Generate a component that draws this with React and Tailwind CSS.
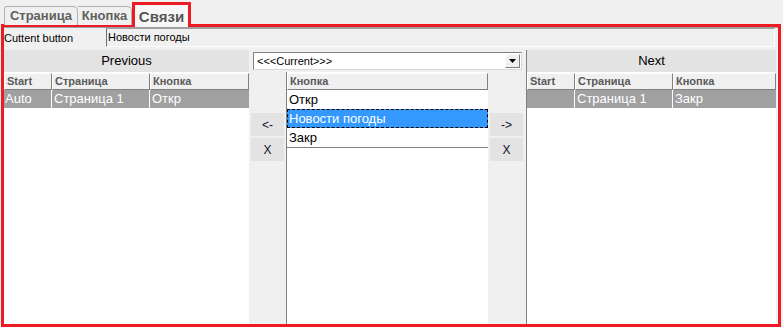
import React from "react";

const raised =
  "border border-t-white border-l-white border-r-[#808080] border-b-[#808080] bg-[#f0f0f0]";

function HeadCell({ w, children }) {
  return (
    <div
      className={`${w} h-[17px] ${raised} flex items-center pl-[2px] text-[11px] font-bold text-[#5a5a5a]`}
    >
      {children}
    </div>
  );
}

function LinkTable({ rows }) {
  return (
    <div className="flex-1 bg-white flex flex-col pt-[1px]">
      <div className="flex">
        <HeadCell w="w-[48px]">Start</HeadCell>
        <HeadCell w="w-[98px]">Страница</HeadCell>
        <HeadCell w="flex-1">Кнопка</HeadCell>
      </div>
      {rows.map((r, i) => (
        <div key={i} className="flex h-[18px] bg-[#a0a0a0] text-white text-[13px] leading-[18px]">
          <div className="w-[48px] pl-[1px] border-r border-white">{r[0]}</div>
          <div className="w-[98px] pl-[2px] border-r border-white">{r[1]}</div>
          <div className="flex-1 pl-[2px]">{r[2]}</div>
        </div>
      ))}
    </div>
  );
}

function SideButtons({ left }) {
  return (
    <div className="w-[37px] bg-[#f0f0f0] flex flex-col items-center pt-[41px] gap-[2px]">
      <div className="w-[33px] h-[23px] bg-[#e3e3e3] flex items-center justify-center text-[12px] text-[#101030]">
        {left ? "<-" : "->"}
      </div>
      <div className="w-[33px] h-[23px] bg-[#e3e3e3] flex items-center justify-center text-[12px] text-[#101030]">
        X
      </div>
    </div>
  );
}

export default function App() {
  const items = ["Откр", "Новости погоды", "Закр"];
  return (
    <div
      className="w-[783px] h-[327px] bg-[#f0f0f0] overflow-hidden flex flex-col"
      style={{ fontFamily: '"Liberation Sans", Arial, sans-serif' }}
    >
      {/* tabs */}
      <div className="h-[24px] flex items-end pl-[4px] relative z-10">
        <div className="h-[19px] mb-[-1px] w-[74px] border border-[#b0b0b0] border-b-0 rounded-tl-[3px] rounded-tr-[5px] bg-[#f0f0f0] text-[13px] font-bold text-[#606060] flex items-center justify-center">
          Страница
        </div>
        <div className="h-[19px] mb-[-1px] w-[54px] border border-l-0 border-[#b0b0b0] border-b-0 rounded-tr-[5px] bg-[#f0f0f0] text-[13px] font-bold text-[#606060] flex items-center justify-center">
          Кнопка
        </div>
        <div className="h-[25px] mb-[-3px] w-[59px] border-[3px] border-b-0 border-[#ed1c24] bg-[#f7f7f7] text-[15px] font-bold text-[#555] flex items-start justify-center pt-[1px]">
          Связи
        </div>
      </div>

      {/* frame */}
      <div className="ml-[1px] w-[780px] h-[303px] border-[3px] border-[#ed1c24] flex flex-col">
        <div className="flex h-[20px] border-t border-[#a0a0a0]">
          <div className="w-[102px] text-[11px] text-black leading-[18px] pt-[1px]">Cuttent button</div>
          <div className="w-[669px] h-[19px] border border-t-[#a0a0a0] border-l-[#707070] border-r-white border-b-white bg-[#f0f0f0] text-[11px] leading-[16px] pl-[1px]">
            Новости погоды
          </div>
        </div>

        <div className="flex flex-1 mt-[3px] pr-[2px]">
          {/* previous */}
          <div className="w-[245px] flex flex-col">
            <div className="h-[22px] bg-[#e3e3e3] flex items-center justify-center text-[13px] text-black">
              Previous
            </div>
            <LinkTable rows={[["Auto", "Страница 1", "Откр"]]} />
          </div>

          {/* middle */}
          <div className="w-[277px] flex flex-col">
            <div className="h-[22px] flex items-center pl-[4px]">
              <div className="w-[269px] h-[18px] bg-white border border-t-[#808080] border-l-[#808080] border-r-[#d8d8d8] border-b-[#d8d8d8] flex items-center">
                <div className="flex-1 text-[11px] pl-[3px] text-black">{"<<<Current>>>"}</div>
                <div className="w-[15px] h-[14px] mr-[1px] bg-[#f0f0f0] border border-t-white border-l-white border-r-[#808080] border-b-[#808080] flex items-center justify-center">
                  <svg width="7" height="4" viewBox="0 0 7 4">
                    <path d="M0 0h7L3.5 4z" fill="#000" />
                  </svg>
                </div>
              </div>
            </div>
            <div className="flex flex-1">
              <SideButtons left />
              <div className="w-[202px] bg-white border-l border-[#808080] flex flex-col pt-[1px]">
                <HeadCell w="w-full">Кнопка</HeadCell>
                {items.map((it, i) => (
                  <div
                    key={it}
                    className={
                      i === 1
                        ? "h-[19px] bg-[#3399ff] text-white border border-dashed border-black text-[13px] leading-[17px] pl-[1px]"
                        : "h-[19px] text-black text-[13px] leading-[19px] pl-[2px]"
                    }
                  >
                    {it}
                  </div>
                ))}
                <div className="border-t border-[#808080]" />
              </div>
              <SideButtons />
            </div>
          </div>

          {/* next */}
          <div className="w-[250px] flex flex-col border-l border-[#808080]">
            <div className="h-[22px] bg-[#e3e3e3] flex items-center justify-center text-[13px] text-black">
              Next
            </div>
            <LinkTable rows={[["", "Страница 1", "Закр"]]} />
          </div>
        </div>
      </div>
    </div>
  );
}
